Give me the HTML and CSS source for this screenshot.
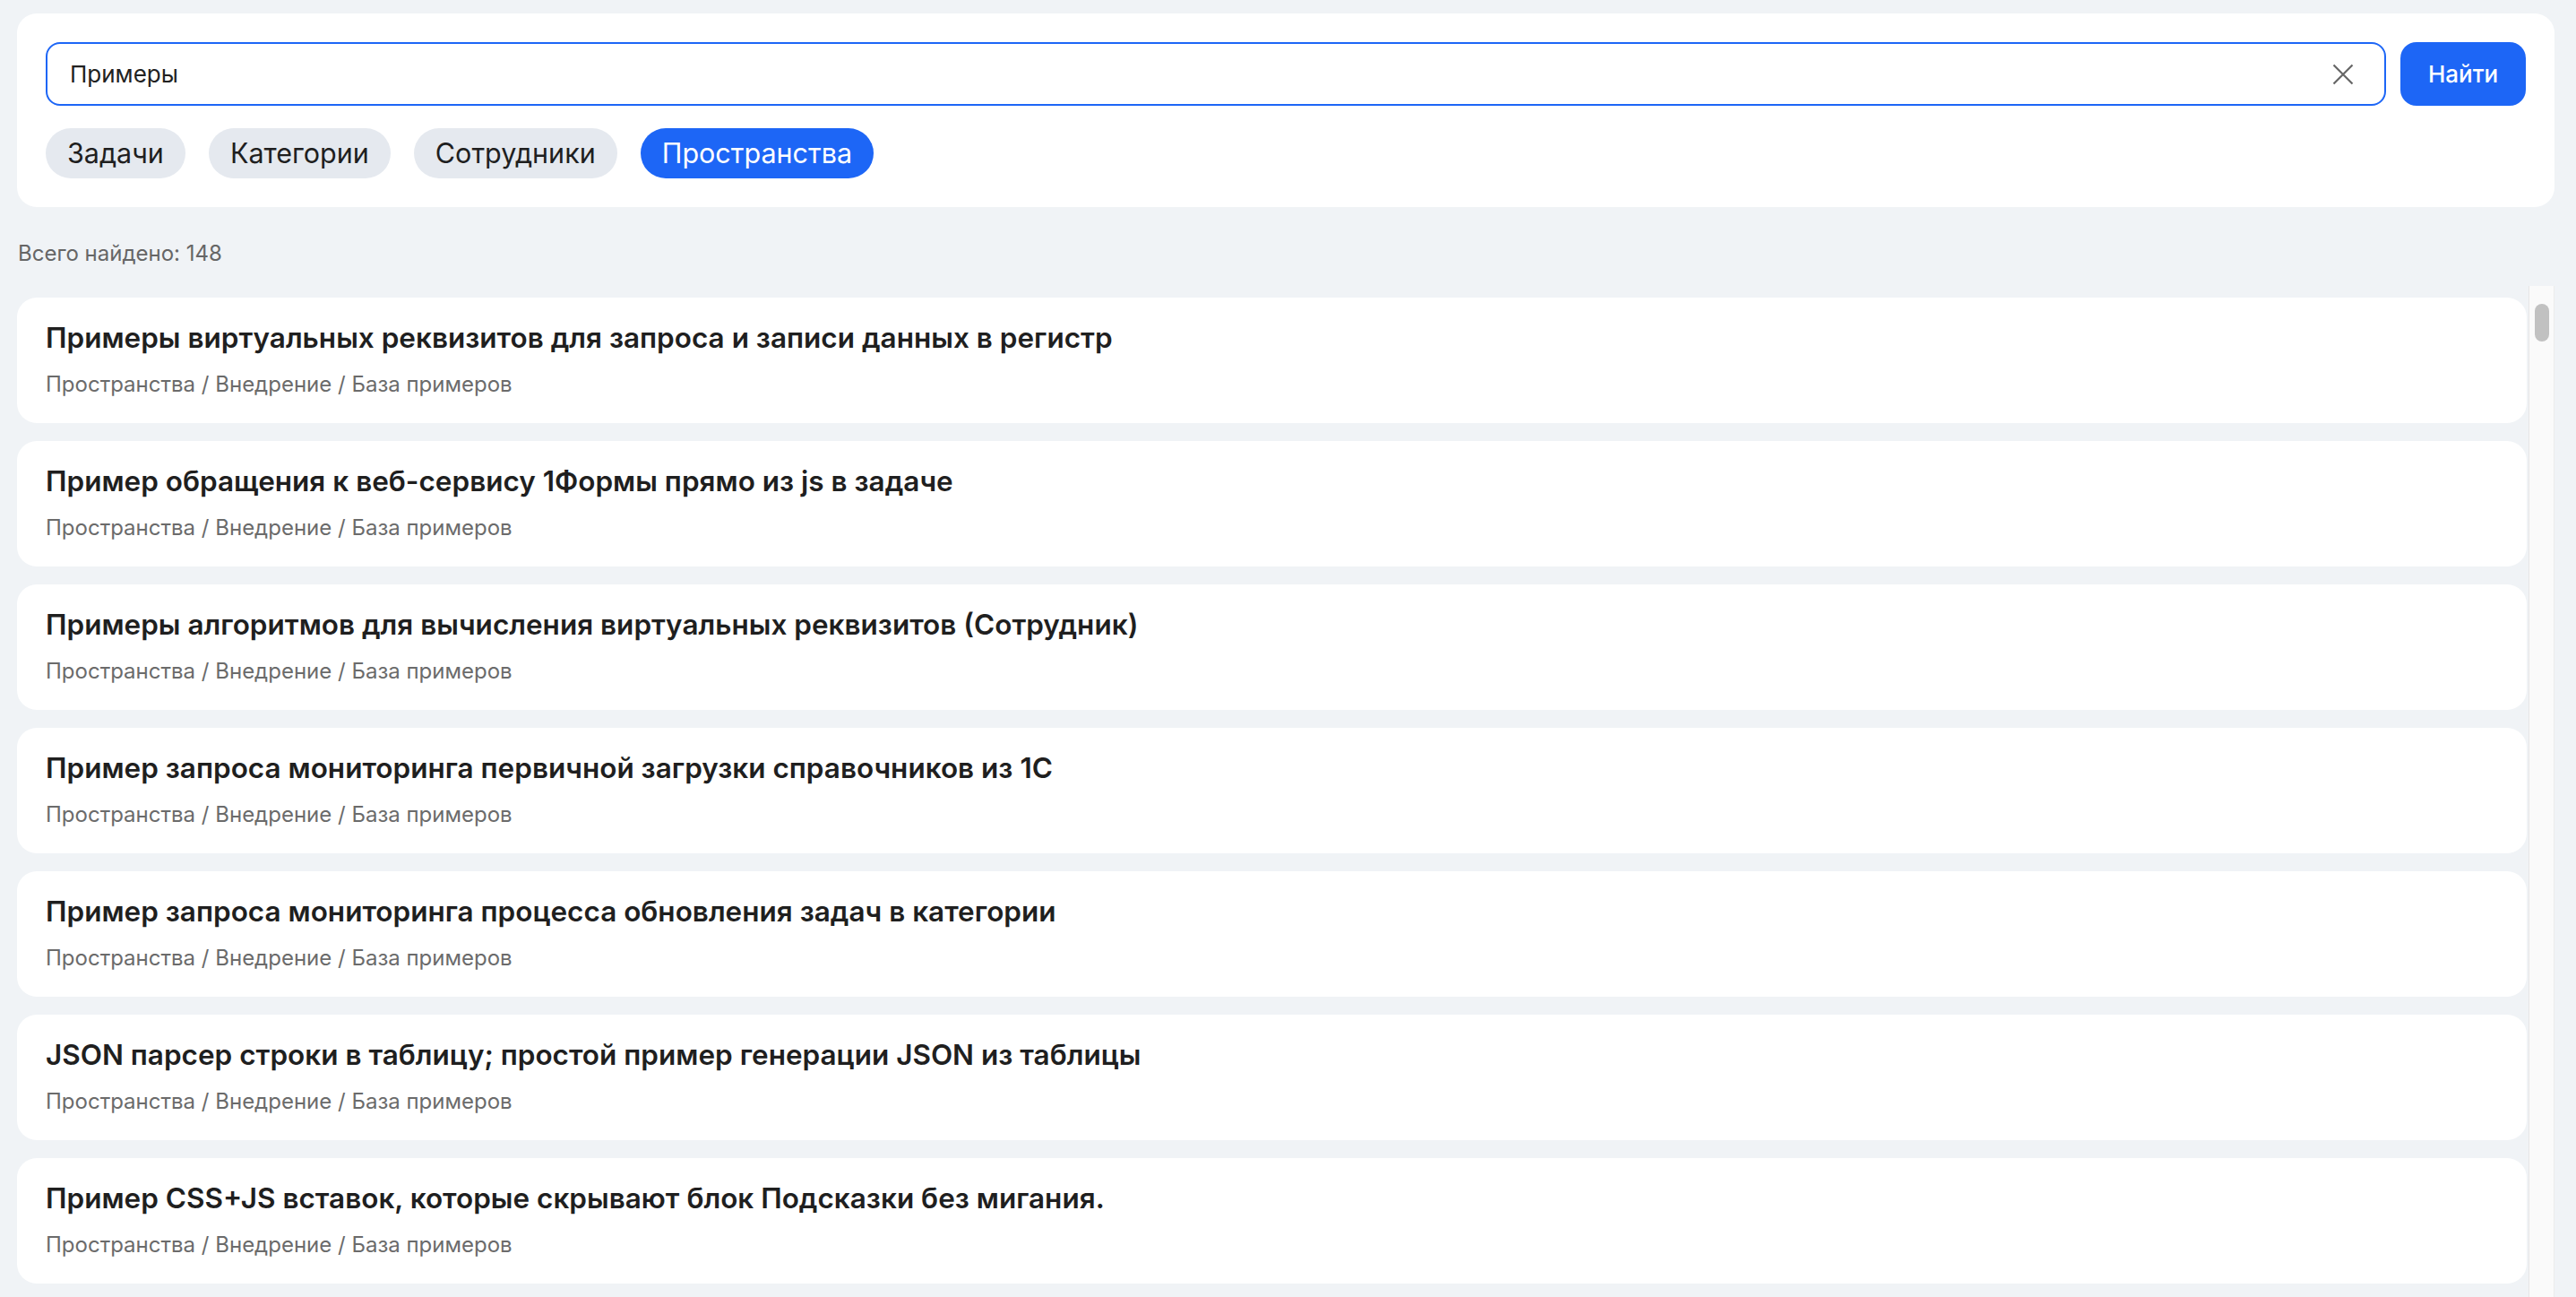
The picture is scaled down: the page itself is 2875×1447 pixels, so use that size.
FILE: index.html
```html
<!DOCTYPE html>
<html lang="ru">
<head>
<meta charset="utf-8">
<title>Поиск</title>
<link rel="stylesheet" href="styles.css">
</head>
<body>
<div class="page">
  <section class="search-card">
    <div class="search-row">
      <div class="search-input">
        <span class="search-value">Примеры</span>
        <svg class="clear-icon" width="24" height="24" viewBox="0 0 24 24" aria-hidden="true">
          <path d="M1.5 1.5 L22.5 22.5 M22.5 1.5 L1.5 22.5" stroke="#666" stroke-width="2.2" fill="none" stroke-linecap="butt"/>
        </svg>
      </div>
      <button class="search-btn">Найти</button>
    </div>
    <div class="chips">
      <span class="chip">Задачи</span>
      <span class="chip">Категории</span>
      <span class="chip">Сотрудники</span>
      <span class="chip chip-active">Пространства</span>
    </div>
  </section>

  <div class="count">Всего найдено: 148</div>

  <div class="results">
    <div class="list">
      <div class="item">
        <div class="item-title">Примеры виртуальных реквизитов для запроса и записи данных в регистр</div>
        <div class="item-path">Пространства / Внедрение / База примеров</div>
      </div>
      <div class="item">
        <div class="item-title">Пример обращения к веб-сервису 1Формы прямо из js в задаче</div>
        <div class="item-path">Пространства / Внедрение / База примеров</div>
      </div>
      <div class="item">
        <div class="item-title">Примеры алгоритмов для вычисления виртуальных реквизитов (Сотрудник)</div>
        <div class="item-path">Пространства / Внедрение / База примеров</div>
      </div>
      <div class="item">
        <div class="item-title">Пример запроса мониторинга первичной загрузки справочников из 1С</div>
        <div class="item-path">Пространства / Внедрение / База примеров</div>
      </div>
      <div class="item">
        <div class="item-title">Пример запроса мониторинга процесса обновления задач в категории</div>
        <div class="item-path">Пространства / Внедрение / База примеров</div>
      </div>
      <div class="item">
        <div class="item-title">JSON парсер строки в таблицу; простой пример генерации JSON из таблицы</div>
        <div class="item-path">Пространства / Внедрение / База примеров</div>
      </div>
      <div class="item">
        <div class="item-title">Пример CSS+JS вставок, которые скрывают блок Подсказки без мигания.</div>
        <div class="item-path">Пространства / Внедрение / База примеров</div>
      </div>
    </div>
    <div class="scrollbar">
      <div class="thumb"></div>
    </div>
  </div>
</div>
</body>
</html>
```

FILE: styles.css
```css
* { box-sizing: border-box; }

html, body {
  margin: 0;
  padding: 0;
  height: 100%;
  overflow: hidden;
}

body {
  background: #f0f3f6;
  font-family: "Inter", "Noto Sans", "Liberation Sans", sans-serif;
  color: #1f1f1f;
}

.page {
  padding: 15px 24px 0 19px;
}

.search-card {
  background: #ffffff;
  border-radius: 22px;
  padding: 32px;
  display: flex;
  flex-direction: column;
  gap: 25px;
}

.search-row {
  display: flex;
  gap: 16px;
  height: 71px;
}

.search-input {
  flex: 1;
  display: flex;
  align-items: center;
  border: 2px solid #1d66f6;
  border-radius: 16px;
  padding: 0 34px 0 25px;
  background: #fff;
}

.search-value {
  flex: 1;
  font-size: 26px;
  color: #222;
}

.clear-icon {
  display: block;
}

.search-btn {
  width: 140px;
  border: none;
  border-radius: 18px;
  background: #1d66f6;
  color: #fff;
  font-family: inherit;
  font-size: 26px;
  font-weight: 500;
  padding: 0;
}

.chips {
  display: flex;
  gap: 26px;
}

.chip {
  height: 56px;
  line-height: 56px;
  padding: 0 24px;
  border-radius: 28px;
  background: #e5e9ef;
  color: #1f1f1f;
  font-size: 30.5px;
}

.chip-active {
  background: #1d66f6;
  color: #fff;
}

.count {
  margin-top: 37px;
  font-size: 24px;
  line-height: 30px;
  color: #666;
  padding-left: 1px;
}

.results {
  margin-top: 21px;
  height: 1128px;
  display: flex;
}

.list {
  flex: 1;
  overflow: hidden;
  padding-top: 13px;
  margin-right: 2px;
  display: flex;
  flex-direction: column;
  gap: 20px;
}

.item {
  flex: none;
  height: 140px;
  background: #fff;
  border-radius: 22px;
  padding: 26px 32px 0;
}

.item-title {
  font-size: 31.5px;
  line-height: 38px;
  font-weight: 600;
  color: #1f1f1f;
}

.item-path {
  margin-top: 18px;
  font-size: 24px;
  line-height: 30px;
  color: #6b6b6b;
}

.scrollbar {
  width: 29px;
  background: #fafafa;
  border-left: 1px solid #e6e6e6;
  border-right: 1px solid #ececec;
  padding: 20px 5px 0 6px;
}

.thumb {
  height: 42px;
  border-radius: 8px;
  background: #c1c1c1;
}
```
